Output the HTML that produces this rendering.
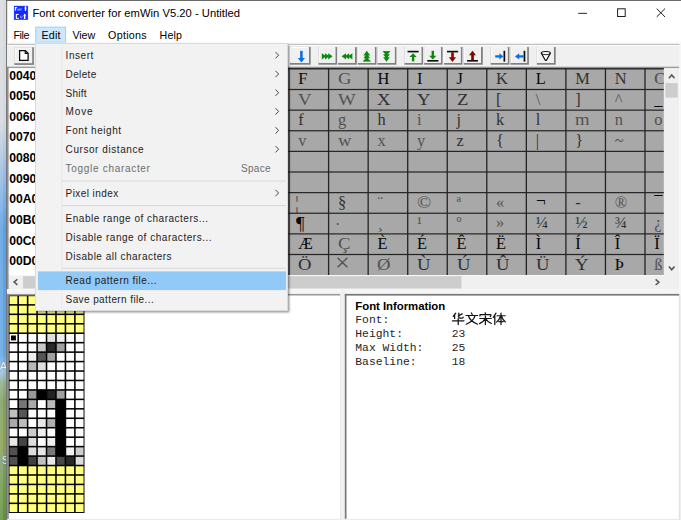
<!DOCTYPE html>
<html><head><meta charset="utf-8"><title>Font converter for emWin</title>
<style>
html,body{margin:0;padding:0;}
body{width:681px;height:520px;overflow:hidden;background:#fff;position:relative;
 font-family:"Liberation Sans",sans-serif;color:#000;}
.a{position:absolute;}
svg.L{position:absolute;left:0;top:0;}
.t{position:absolute;white-space:nowrap;line-height:1;}
.mi{position:absolute;white-space:nowrap;line-height:1;font-size:10px;color:#1c1c1c;}
.gc{position:absolute;white-space:nowrap;line-height:1;font-family:"Liberation Serif",serif;color:#000;}
.lab{position:absolute;white-space:nowrap;line-height:1;font-weight:bold;font-size:12.2px;color:#000;}
.mono{position:absolute;white-space:nowrap;line-height:1;font-family:"Liberation Mono",monospace;font-size:11.35px;color:#262626;}
</style></head>
<body>
<svg class="L" width="681" height="520" viewBox="0 0 681 520"><defs><linearGradient id="dsk" x1="0" y1="0" x2="0" y2="520" gradientUnits="userSpaceOnUse"><stop offset="0.0000" stop-color="#d9dbde"/><stop offset="0.2308" stop-color="#d6d9dd"/><stop offset="0.3365" stop-color="#97bbe2"/><stop offset="0.4423" stop-color="#5a9fe0"/><stop offset="0.6827" stop-color="#62a4e2"/><stop offset="0.7154" stop-color="#9cc2de"/><stop offset="0.7346" stop-color="#8fb090"/><stop offset="0.7692" stop-color="#7fa060"/><stop offset="0.8558" stop-color="#8aa050"/><stop offset="0.8885" stop-color="#7c9c68"/><stop offset="0.9423" stop-color="#6b9a45"/><stop offset="1.0000" stop-color="#5f8f3a"/></linearGradient></defs><rect x="0.00" y="0.00" width="7.00" height="520.00" fill="url(#dsk)"/><rect x="0.00" y="0.00" width="3.00" height="520.00" fill="#fff" opacity=".14"/><g font-family="Liberation Sans, sans-serif" font-size="11.5" fill="#f4f4f4" stroke="#20304a" stroke-width="0.35" paint-order="stroke"><text x="-0.6" y="370">A</text><text x="1.8" y="464.3">S</text></g><rect x="6.10" y="0.00" width="1.10" height="520.00" fill="#6e6e6e"/><rect x="6.10" y="0.00" width="675.00" height="0.90" fill="#5a5a5a"/><g transform="translate(13.9 5.8)"><rect width="14.2" height="14.1" fill="#2a55ff"/><rect x="0.6" y="0.6" width="13" height="12.9" fill="#1228ff"/><g fill="#fff"><rect x="1.0" y="1.3" width="1.0" height="3.6"/><rect x="1.0" y="1.3" width="2.3" height="0.9"/><rect x="1.0" y="2.8" width="1.7" height="0.7" opacity=".8"/><rect x="3.3" y="2.9" width="1.6" height="2.0" opacity=".55"/><rect x="5.4" y="2.9" width="0.8" height="2.0" opacity=".6"/><rect x="6.8" y="2.9" width="0.8" height="2.0" opacity=".6"/><rect x="5.4" y="2.8" width="2.2" height="0.7" opacity=".5"/><rect x="10.9" y="0.5" width="1.4" height="4.6"/><rect x="10.2" y="1.9" width="2.8" height="0.8" opacity=".6"/><rect x="1.9" y="8.4" width="1.1" height="4.3"/><rect x="2.2" y="8.1" width="2.6" height="1.0"/><rect x="2.2" y="12.0" width="2.8" height="1.0"/><rect x="6.4" y="9.9" width="0.8" height="2.2" opacity=".55"/><rect x="7.8" y="9.9" width="0.8" height="1.6" opacity=".55"/><rect x="7.0" y="11.6" width="1.0" height="1.0" opacity=".6"/><rect x="10.0" y="8.1" width="1.5" height="5.1"/><rect x="9.2" y="9.5" width="3.1" height="0.8" opacity=".6"/></g></g><rect x="578.20" y="12.85" width="8.80" height="0.95" fill="#1e1e1e"/><rect x="617.6" y="8.8" width="7.6" height="7.7" fill="none" stroke="#1e1e1e" stroke-width="1"/><path d="M656.7 8.6 L665 16.9 M665 8.6 L656.7 16.9" stroke="#1e1e1e" stroke-width="1" fill="none"/><rect x="35.20" y="26.65" width="30.85" height="16.15" fill="#99d1ff"/><rect x="36.20" y="27.65" width="28.85" height="14.15" fill="#cce8ff"/><rect x="7.20" y="42.60" width="674.00" height="25.40" fill="#f0f0f0"/><rect x="7.20" y="44.20" width="674.00" height="0.95" fill="#b4b4b4"/><rect x="7.20" y="45.15" width="674.00" height="0.90" fill="#ffffff"/><g transform="translate(14.4 47.3)"><rect x="0.00" y="0.00" width="19.50" height="17.60" fill="#808080"/><rect x="0.00" y="0.00" width="17.70" height="15.80" fill="#ffffff"/><rect x="1.00" y="1.00" width="16.70" height="14.80" fill="#f0f0f0"/><path d="M5.2 3.2 H11 L13.7 5.9 V13 H5.2 Z" fill="#fff" stroke="#0c0c0c" stroke-width="1.25"/><path d="M10.8 3.4 V6.1 H13.5" fill="none" stroke="#0c0c0c" stroke-width="1.1"/></g><g transform="translate(290.0 46.9)"><rect x="0.00" y="0.00" width="20.70" height="17.80" fill="#808080"/><rect x="0.00" y="0.00" width="18.90" height="16.00" fill="#ffffff"/><rect x="1.00" y="1.00" width="17.90" height="15.00" fill="#f0f0f0"/><rect x="10.1" y="4" width="2.6" height="7.8" fill="#0a6fe0"/><path d="M7.8 11 H15 L11.4 15.5 Z" fill="#0a6fe0"/></g><g transform="translate(318.4 47.1)"><rect x="0.00" y="0.00" width="18.70" height="17.60" fill="#808080"/><rect x="0.00" y="0.00" width="16.90" height="15.80" fill="#ffffff"/><rect x="1.00" y="1.00" width="15.90" height="14.80" fill="#f0f0f0"/><path d="M3.40 6.1 L7.80 9.2 L3.40 12.3 Z" fill="#0a8a0a"/><path d="M6.60 6.1 L11.00 9.2 L6.60 12.3 Z" fill="#0a8a0a"/><path d="M9.80 6.1 L14.20 9.2 L9.80 12.3 Z" fill="#0a8a0a"/></g><g transform="translate(338.09999999999997 47.1)"><rect x="0.00" y="0.00" width="18.70" height="17.60" fill="#808080"/><rect x="0.00" y="0.00" width="16.90" height="15.80" fill="#ffffff"/><rect x="1.00" y="1.00" width="15.90" height="14.80" fill="#f0f0f0"/><path d="M14.30 6.1 L9.90 9.2 L14.30 12.3 Z" fill="#0a8a0a"/><path d="M11.10 6.1 L6.70 9.2 L11.10 12.3 Z" fill="#0a8a0a"/><path d="M7.90 6.1 L3.50 9.2 L7.90 12.3 Z" fill="#0a8a0a"/></g><g transform="translate(357.79999999999995 47.1)"><rect x="0.00" y="0.00" width="18.70" height="17.60" fill="#808080"/><rect x="0.00" y="0.00" width="16.90" height="15.80" fill="#ffffff"/><rect x="1.00" y="1.00" width="15.90" height="14.80" fill="#f0f0f0"/><path d="M5.6 8.30 L9.0 3.70 L12.4 8.30 Z" fill="#0a8a0a"/><path d="M5.6 11.20 L9.0 6.60 L12.4 11.20 Z" fill="#0a8a0a"/><path d="M5.6 14.10 L9.0 9.50 L12.4 14.10 Z" fill="#0a8a0a"/><rect x="5.2" y="13.4" width="7.6" height="1" fill="#0a8a0a"/></g><g transform="translate(377.5 47.1)"><rect x="0.00" y="0.00" width="18.90" height="17.60" fill="#808080"/><rect x="0.00" y="0.00" width="17.10" height="15.80" fill="#ffffff"/><rect x="1.00" y="1.00" width="16.10" height="14.80" fill="#f0f0f0"/><path d="M5.6 4.30 L9.0 8.90 L12.4 4.30 Z" fill="#0a8a0a"/><path d="M5.6 7.20 L9.0 11.80 L12.4 7.20 Z" fill="#0a8a0a"/><path d="M5.6 10.10 L9.0 14.70 L12.4 10.10 Z" fill="#0a8a0a"/><rect x="5.4" y="4.1" width="7.2" height="1" fill="#0a8a0a"/></g><g transform="translate(404.5 47.1)"><rect x="0.00" y="0.00" width="18.60" height="17.60" fill="#808080"/><rect x="0.00" y="0.00" width="16.80" height="15.80" fill="#ffffff"/><rect x="1.00" y="1.00" width="15.80" height="14.80" fill="#f0f0f0"/><rect x="3.05" y="3.7" width="11.1" height="1.6" fill="#0c0c0c"/><path d="M8.6 6.1 L12.2 10 H5 Z" fill="#0a8a0a"/><rect x="7.4" y="9.6" width="2.4" height="4.7" fill="#0a8a0a"/></g><g transform="translate(424.2 47.1)"><rect x="0.00" y="0.00" width="18.40" height="17.60" fill="#808080"/><rect x="0.00" y="0.00" width="16.60" height="15.80" fill="#ffffff"/><rect x="1.00" y="1.00" width="15.60" height="14.80" fill="#f0f0f0"/><rect x="3.1" y="12.9" width="11.1" height="1.6" fill="#0c0c0c"/><rect x="7.4" y="3.7" width="2.4" height="5.4" fill="#0a8a0a"/><path d="M5 8.6 H12.2 L8.6 12.4 Z" fill="#0a8a0a"/></g><g transform="translate(444.0 47.1)"><rect x="0.00" y="0.00" width="18.40" height="17.60" fill="#808080"/><rect x="0.00" y="0.00" width="16.60" height="15.80" fill="#ffffff"/><rect x="1.00" y="1.00" width="15.60" height="14.80" fill="#f0f0f0"/><rect x="3.0" y="3.7" width="11.1" height="1.6" fill="#0c0c0c"/><rect x="7.2" y="5.2" width="2.6" height="5.6" fill="#860000"/><path d="M4.9 10.2 H12.1 L8.5 14.9 Z" fill="#860000"/></g><g transform="translate(463.7 47.1)"><rect x="0.00" y="0.00" width="19.10" height="17.60" fill="#808080"/><rect x="0.00" y="0.00" width="17.30" height="15.80" fill="#ffffff"/><rect x="1.00" y="1.00" width="16.30" height="14.80" fill="#f0f0f0"/><rect x="3.4" y="12.9" width="10.8" height="1.6" fill="#0c0c0c"/><path d="M8.8 3.6 L12.3 8.2 H5.3 Z" fill="#860000"/><rect x="7.5" y="7.8" width="2.7" height="5.2" fill="#860000"/></g><g transform="translate(490.7 47.1)"><rect x="0.00" y="0.00" width="18.70" height="17.60" fill="#808080"/><rect x="0.00" y="0.00" width="16.90" height="15.80" fill="#ffffff"/><rect x="1.00" y="1.00" width="15.90" height="14.80" fill="#f0f0f0"/><rect x="12.8" y="3.7" width="1.7" height="10.8" fill="#0c0c0c"/><rect x="4.5" y="8.15" width="5" height="2.3" fill="#0a6fe0"/><path d="M8.7 6.1 L12.7 9.3 L8.7 12.5 Z" fill="#0a6fe0"/></g><g transform="translate(510.4 47.1)"><rect x="0.00" y="0.00" width="18.50" height="17.60" fill="#808080"/><rect x="0.00" y="0.00" width="16.70" height="15.80" fill="#ffffff"/><rect x="1.00" y="1.00" width="15.70" height="14.80" fill="#f0f0f0"/><rect x="13.2" y="3.7" width="1.7" height="10.8" fill="#0c0c0c"/><rect x="8" y="8.15" width="5.3" height="2.3" fill="#0a6fe0"/><path d="M8.8 6.1 L4.6 9.3 L8.8 12.5 Z" fill="#0a6fe0"/></g><g transform="translate(536.8 47.1)"><rect x="0.00" y="0.00" width="18.90" height="17.60" fill="#808080"/><rect x="0.00" y="0.00" width="17.10" height="15.80" fill="#ffffff"/><rect x="1.00" y="1.00" width="16.10" height="14.80" fill="#f0f0f0"/><path d="M4.5 6 C4.5 3.8 13.6 3.8 13.6 6 L9.6 13.2 H8.5 Z" fill="#fff" stroke="#0c0c0c" stroke-width="1.15" stroke-linejoin="round"/><path d="M4.7 6.4 C6 8 12.1 8 13.4 6.4" fill="none" stroke="#0c0c0c" stroke-width="0.9"/></g><rect x="6.90" y="66.70" width="1.90" height="222.40" fill="#8e8e8e"/><rect x="8.00" y="66.70" width="671.30" height="1.60" fill="#9c9c9c"/><rect x="8.75" y="68.30" width="43.00" height="206.70" fill="#fff"/><rect x="51.75" y="68.30" width="612.15" height="206.70" fill="#a8a8a8"/><rect x="51.75" y="67.90" width="612.15" height="1.00" fill="#3a3a3a"/><rect x="51.10" y="68.30" width="1.30" height="206.70" fill="#242424"/><rect x="90.65" y="68.30" width="1.30" height="206.70" fill="#242424"/><rect x="130.20" y="68.30" width="1.30" height="206.70" fill="#242424"/><rect x="169.75" y="68.30" width="1.30" height="206.70" fill="#242424"/><rect x="209.30" y="68.30" width="1.30" height="206.70" fill="#242424"/><rect x="248.85" y="68.30" width="1.30" height="206.70" fill="#242424"/><rect x="288.40" y="68.30" width="1.30" height="206.70" fill="#242424"/><rect x="327.95" y="68.30" width="1.30" height="206.70" fill="#242424"/><rect x="367.50" y="68.30" width="1.30" height="206.70" fill="#242424"/><rect x="407.05" y="68.30" width="1.30" height="206.70" fill="#242424"/><rect x="446.60" y="68.30" width="1.30" height="206.70" fill="#242424"/><rect x="486.15" y="68.30" width="1.30" height="206.70" fill="#242424"/><rect x="525.70" y="68.30" width="1.30" height="206.70" fill="#242424"/><rect x="565.25" y="68.30" width="1.30" height="206.70" fill="#242424"/><rect x="604.80" y="68.30" width="1.30" height="206.70" fill="#242424"/><rect x="644.35" y="68.30" width="1.30" height="206.70" fill="#242424"/><rect x="51.75" y="68.28" width="612.15" height="1.20" fill="#242424"/><rect x="51.75" y="88.90" width="612.15" height="1.20" fill="#242424"/><rect x="51.75" y="109.53" width="612.15" height="1.20" fill="#242424"/><rect x="51.75" y="130.15" width="612.15" height="1.20" fill="#242424"/><rect x="51.75" y="150.78" width="612.15" height="1.20" fill="#242424"/><rect x="51.75" y="171.40" width="612.15" height="1.20" fill="#242424"/><rect x="51.75" y="192.03" width="612.15" height="1.20" fill="#242424"/><rect x="51.75" y="212.65" width="612.15" height="1.20" fill="#242424"/><rect x="51.75" y="233.28" width="612.15" height="1.20" fill="#242424"/><rect x="51.75" y="253.90" width="612.15" height="1.20" fill="#242424"/><rect x="663.90" y="68.30" width="15.40" height="221.00" fill="#f0f0f0"/><rect x="665.40" y="83.10" width="12.30" height="14.50" fill="#cdcdcd"/><path d="M668.9 78.2 L671.7 74.9 L674.5 78.2" fill="none" stroke="#555" stroke-width="1.55"/><path d="M668.9 266.5 L671.7 269.8 L674.5 266.5" fill="none" stroke="#555" stroke-width="1.55"/><rect x="679.40" y="43.00" width="1.60" height="477.00" fill="#f7f7f7"/><rect x="8.75" y="275.40" width="670.55" height="13.90" fill="#f0f0f0"/><rect x="23.10" y="276.20" width="438.40" height="12.30" fill="#cdcdcd"/><path d="M17.4 279.3 L14.1 282.1 L17.4 284.9" fill="none" stroke="#555" stroke-width="1.5"/><path d="M655.6 279.4 L658.9 282.2 L655.6 285" fill="none" stroke="#555" stroke-width="1.5"/><rect x="6.90" y="289.30" width="672.40" height="4.60" fill="#f5f5f5"/><rect x="7.00" y="293.90" width="334.00" height="226.10" fill="#fff"/><rect x="7.00" y="293.90" width="334.00" height="1.60" fill="#9a9a9a"/><rect x="6.80" y="293.90" width="2.00" height="226.10" fill="#8e8e8e"/><rect x="340.00" y="294.00" width="1.20" height="226.00" fill="#e6e6e6"/><rect x="341.20" y="289.30" width="3.60" height="230.70" fill="#f0f0f0"/><rect x="7.20" y="518.80" width="673.80" height="1.20" fill="#ebebeb"/><rect x="344.80" y="293.90" width="334.50" height="1.70" fill="#787878"/><rect x="344.80" y="293.90" width="1.70" height="224.90" fill="#787878"/><rect x="678.90" y="295.50" width="1.10" height="224.50" fill="#e2e2e2"/><rect x="680.00" y="295.50" width="1.00" height="224.50" fill="#eeeeee"/><rect x="8.75" y="295.45" width="75.75" height="217.50" fill="#000"/><rect x="9.50" y="296.20" width="7.90" height="7.90" fill="#ffff80"/><rect x="18.95" y="296.20" width="7.90" height="7.90" fill="#ffff80"/><rect x="28.40" y="296.20" width="7.90" height="7.90" fill="#ffff80"/><rect x="37.85" y="296.20" width="7.90" height="7.90" fill="#ffff80"/><rect x="47.30" y="296.20" width="7.90" height="7.90" fill="#ffff80"/><rect x="56.75" y="296.20" width="7.90" height="7.90" fill="#ffff80"/><rect x="66.20" y="296.20" width="7.90" height="7.90" fill="#ffff80"/><rect x="75.65" y="296.20" width="7.90" height="7.90" fill="#ffff80"/><rect x="9.50" y="305.65" width="7.90" height="7.90" fill="#ffff80"/><rect x="18.95" y="305.65" width="7.90" height="7.90" fill="#ffff80"/><rect x="28.40" y="305.65" width="7.90" height="7.90" fill="#ffff80"/><rect x="37.85" y="305.65" width="7.90" height="7.90" fill="#ffff80"/><rect x="47.30" y="305.65" width="7.90" height="7.90" fill="#ffff80"/><rect x="56.75" y="305.65" width="7.90" height="7.90" fill="#ffff80"/><rect x="66.20" y="305.65" width="7.90" height="7.90" fill="#ffff80"/><rect x="75.65" y="305.65" width="7.90" height="7.90" fill="#ffff80"/><rect x="9.50" y="315.10" width="7.90" height="7.90" fill="#ffff80"/><rect x="18.95" y="315.10" width="7.90" height="7.90" fill="#ffff80"/><rect x="28.40" y="315.10" width="7.90" height="7.90" fill="#ffff80"/><rect x="37.85" y="315.10" width="7.90" height="7.90" fill="#ffff80"/><rect x="47.30" y="315.10" width="7.90" height="7.90" fill="#ffff80"/><rect x="56.75" y="315.10" width="7.90" height="7.90" fill="#ffff80"/><rect x="66.20" y="315.10" width="7.90" height="7.90" fill="#ffff80"/><rect x="75.65" y="315.10" width="7.90" height="7.90" fill="#ffff80"/><rect x="9.50" y="324.55" width="7.90" height="7.90" fill="#ffff80"/><rect x="18.95" y="324.55" width="7.90" height="7.90" fill="#ffff80"/><rect x="28.40" y="324.55" width="7.90" height="7.90" fill="#ffff80"/><rect x="37.85" y="324.55" width="7.90" height="7.90" fill="#ffff80"/><rect x="47.30" y="324.55" width="7.90" height="7.90" fill="#ffff80"/><rect x="56.75" y="324.55" width="7.90" height="7.90" fill="#ffff80"/><rect x="66.20" y="324.55" width="7.90" height="7.90" fill="#ffff80"/><rect x="75.65" y="324.55" width="7.90" height="7.90" fill="#ffff80"/><rect x="9.50" y="334.00" width="7.90" height="7.90" fill="#fff"/><rect x="18.95" y="334.00" width="7.90" height="7.90" fill="#fff"/><rect x="28.40" y="334.00" width="7.90" height="7.90" fill="#fff"/><rect x="37.85" y="334.00" width="7.90" height="7.90" fill="#fff"/><rect x="47.30" y="334.00" width="7.90" height="7.90" fill="#e0e0e0"/><rect x="56.75" y="334.00" width="7.90" height="7.90" fill="#eeeeee"/><rect x="66.20" y="334.00" width="7.90" height="7.90" fill="#fff"/><rect x="75.65" y="334.00" width="7.90" height="7.90" fill="#fff"/><rect x="9.50" y="343.45" width="7.90" height="7.90" fill="#fff"/><rect x="18.95" y="343.45" width="7.90" height="7.90" fill="#fff"/><rect x="28.40" y="343.45" width="7.90" height="7.90" fill="#fff"/><rect x="37.85" y="343.45" width="7.90" height="7.90" fill="#c8c8c8"/><rect x="47.30" y="343.45" width="7.90" height="7.90" fill="#282828"/><rect x="56.75" y="343.45" width="7.90" height="7.90" fill="#a0a0a0"/><rect x="66.20" y="343.45" width="7.90" height="7.90" fill="#fff"/><rect x="75.65" y="343.45" width="7.90" height="7.90" fill="#fff"/><rect x="9.50" y="352.90" width="7.90" height="7.90" fill="#fff"/><rect x="18.95" y="352.90" width="7.90" height="7.90" fill="#fff"/><rect x="28.40" y="352.90" width="7.90" height="7.90" fill="#eeeeee"/><rect x="37.85" y="352.90" width="7.90" height="7.90" fill="#555555"/><rect x="47.30" y="352.90" width="7.90" height="7.90" fill="#a0a0a0"/><rect x="56.75" y="352.90" width="7.90" height="7.90" fill="#fff"/><rect x="66.20" y="352.90" width="7.90" height="7.90" fill="#fff"/><rect x="75.65" y="352.90" width="7.90" height="7.90" fill="#fff"/><rect x="9.50" y="362.35" width="7.90" height="7.90" fill="#fff"/><rect x="18.95" y="362.35" width="7.90" height="7.90" fill="#fff"/><rect x="28.40" y="362.35" width="7.90" height="7.90" fill="#b8b8b8"/><rect x="37.85" y="362.35" width="7.90" height="7.90" fill="#e0e0e0"/><rect x="47.30" y="362.35" width="7.90" height="7.90" fill="#fff"/><rect x="56.75" y="362.35" width="7.90" height="7.90" fill="#fff"/><rect x="66.20" y="362.35" width="7.90" height="7.90" fill="#fff"/><rect x="75.65" y="362.35" width="7.90" height="7.90" fill="#fff"/><rect x="9.50" y="371.80" width="7.90" height="7.90" fill="#fff"/><rect x="18.95" y="371.80" width="7.90" height="7.90" fill="#fff"/><rect x="28.40" y="371.80" width="7.90" height="7.90" fill="#fff"/><rect x="37.85" y="371.80" width="7.90" height="7.90" fill="#fff"/><rect x="47.30" y="371.80" width="7.90" height="7.90" fill="#fff"/><rect x="56.75" y="371.80" width="7.90" height="7.90" fill="#fff"/><rect x="66.20" y="371.80" width="7.90" height="7.90" fill="#fff"/><rect x="75.65" y="371.80" width="7.90" height="7.90" fill="#fff"/><rect x="9.50" y="381.25" width="7.90" height="7.90" fill="#fff"/><rect x="18.95" y="381.25" width="7.90" height="7.90" fill="#fff"/><rect x="28.40" y="381.25" width="7.90" height="7.90" fill="#fff"/><rect x="37.85" y="381.25" width="7.90" height="7.90" fill="#fff"/><rect x="47.30" y="381.25" width="7.90" height="7.90" fill="#fff"/><rect x="56.75" y="381.25" width="7.90" height="7.90" fill="#fff"/><rect x="66.20" y="381.25" width="7.90" height="7.90" fill="#fff"/><rect x="75.65" y="381.25" width="7.90" height="7.90" fill="#fff"/><rect x="9.50" y="390.70" width="7.90" height="7.90" fill="#fff"/><rect x="18.95" y="390.70" width="7.90" height="7.90" fill="#fff"/><rect x="28.40" y="390.70" width="7.90" height="7.90" fill="#999999"/><rect x="37.85" y="390.70" width="7.90" height="7.90" fill="#000000"/><rect x="47.30" y="390.70" width="7.90" height="7.90" fill="#222222"/><rect x="56.75" y="390.70" width="7.90" height="7.90" fill="#a0a0a0"/><rect x="66.20" y="390.70" width="7.90" height="7.90" fill="#fff"/><rect x="75.65" y="390.70" width="7.90" height="7.90" fill="#fff"/><rect x="9.50" y="400.15" width="7.90" height="7.90" fill="#fff"/><rect x="18.95" y="400.15" width="7.90" height="7.90" fill="#777777"/><rect x="28.40" y="400.15" width="7.90" height="7.90" fill="#aaaaaa"/><rect x="37.85" y="400.15" width="7.90" height="7.90" fill="#fff"/><rect x="47.30" y="400.15" width="7.90" height="7.90" fill="#bbbbbb"/><rect x="56.75" y="400.15" width="7.90" height="7.90" fill="#000000"/><rect x="66.20" y="400.15" width="7.90" height="7.90" fill="#fff"/><rect x="75.65" y="400.15" width="7.90" height="7.90" fill="#fff"/><rect x="9.50" y="409.60" width="7.90" height="7.90" fill="#c0c0c0"/><rect x="18.95" y="409.60" width="7.90" height="7.90" fill="#555555"/><rect x="28.40" y="409.60" width="7.90" height="7.90" fill="#fff"/><rect x="37.85" y="409.60" width="7.90" height="7.90" fill="#fff"/><rect x="47.30" y="409.60" width="7.90" height="7.90" fill="#fff"/><rect x="56.75" y="409.60" width="7.90" height="7.90" fill="#000000"/><rect x="66.20" y="409.60" width="7.90" height="7.90" fill="#fff"/><rect x="75.65" y="409.60" width="7.90" height="7.90" fill="#fff"/><rect x="9.50" y="419.05" width="7.90" height="7.90" fill="#aaaaaa"/><rect x="18.95" y="419.05" width="7.90" height="7.90" fill="#bbbbbb"/><rect x="28.40" y="419.05" width="7.90" height="7.90" fill="#fff"/><rect x="37.85" y="419.05" width="7.90" height="7.90" fill="#e8e8e8"/><rect x="47.30" y="419.05" width="7.90" height="7.90" fill="#b0b0b0"/><rect x="56.75" y="419.05" width="7.90" height="7.90" fill="#000000"/><rect x="66.20" y="419.05" width="7.90" height="7.90" fill="#fff"/><rect x="75.65" y="419.05" width="7.90" height="7.90" fill="#fff"/><rect x="9.50" y="428.50" width="7.90" height="7.90" fill="#fff"/><rect x="18.95" y="428.50" width="7.90" height="7.90" fill="#fff"/><rect x="28.40" y="428.50" width="7.90" height="7.90" fill="#cccccc"/><rect x="37.85" y="428.50" width="7.90" height="7.90" fill="#eeeeee"/><rect x="47.30" y="428.50" width="7.90" height="7.90" fill="#fff"/><rect x="56.75" y="428.50" width="7.90" height="7.90" fill="#000000"/><rect x="66.20" y="428.50" width="7.90" height="7.90" fill="#fff"/><rect x="75.65" y="428.50" width="7.90" height="7.90" fill="#fff"/><rect x="9.50" y="437.95" width="7.90" height="7.90" fill="#e8e8e8"/><rect x="18.95" y="437.95" width="7.90" height="7.90" fill="#444444"/><rect x="28.40" y="437.95" width="7.90" height="7.90" fill="#dddddd"/><rect x="37.85" y="437.95" width="7.90" height="7.90" fill="#fff"/><rect x="47.30" y="437.95" width="7.90" height="7.90" fill="#eeeeee"/><rect x="56.75" y="437.95" width="7.90" height="7.90" fill="#000000"/><rect x="66.20" y="437.95" width="7.90" height="7.90" fill="#fff"/><rect x="75.65" y="437.95" width="7.90" height="7.90" fill="#fff"/><rect x="9.50" y="447.40" width="7.90" height="7.90" fill="#505050"/><rect x="18.95" y="447.40" width="7.90" height="7.90" fill="#000000"/><rect x="28.40" y="447.40" width="7.90" height="7.90" fill="#dcdcdc"/><rect x="37.85" y="447.40" width="7.90" height="7.90" fill="#e6e6e6"/><rect x="47.30" y="447.40" width="7.90" height="7.90" fill="#777777"/><rect x="56.75" y="447.40" width="7.90" height="7.90" fill="#000000"/><rect x="66.20" y="447.40" width="7.90" height="7.90" fill="#f0f0f0"/><rect x="75.65" y="447.40" width="7.90" height="7.90" fill="#cccccc"/><rect x="9.50" y="456.85" width="7.90" height="7.90" fill="#505050"/><rect x="18.95" y="456.85" width="7.90" height="7.90" fill="#000000"/><rect x="28.40" y="456.85" width="7.90" height="7.90" fill="#404040"/><rect x="37.85" y="456.85" width="7.90" height="7.90" fill="#c0c0c0"/><rect x="47.30" y="456.85" width="7.90" height="7.90" fill="#e8e8e8"/><rect x="56.75" y="456.85" width="7.90" height="7.90" fill="#484848"/><rect x="66.20" y="456.85" width="7.90" height="7.90" fill="#282828"/><rect x="75.65" y="456.85" width="7.90" height="7.90" fill="#dcdcdc"/><rect x="9.50" y="466.30" width="7.90" height="7.90" fill="#ffff80"/><rect x="18.95" y="466.30" width="7.90" height="7.90" fill="#ffff80"/><rect x="28.40" y="466.30" width="7.90" height="7.90" fill="#ffff80"/><rect x="37.85" y="466.30" width="7.90" height="7.90" fill="#ffff80"/><rect x="47.30" y="466.30" width="7.90" height="7.90" fill="#ffff80"/><rect x="56.75" y="466.30" width="7.90" height="7.90" fill="#ffff80"/><rect x="66.20" y="466.30" width="7.90" height="7.90" fill="#ffff80"/><rect x="75.65" y="466.30" width="7.90" height="7.90" fill="#ffff80"/><rect x="9.50" y="475.75" width="7.90" height="7.90" fill="#ffff80"/><rect x="18.95" y="475.75" width="7.90" height="7.90" fill="#ffff80"/><rect x="28.40" y="475.75" width="7.90" height="7.90" fill="#ffff80"/><rect x="37.85" y="475.75" width="7.90" height="7.90" fill="#ffff80"/><rect x="47.30" y="475.75" width="7.90" height="7.90" fill="#ffff80"/><rect x="56.75" y="475.75" width="7.90" height="7.90" fill="#ffff80"/><rect x="66.20" y="475.75" width="7.90" height="7.90" fill="#ffff80"/><rect x="75.65" y="475.75" width="7.90" height="7.90" fill="#ffff80"/><rect x="9.50" y="485.20" width="7.90" height="7.90" fill="#ffff80"/><rect x="18.95" y="485.20" width="7.90" height="7.90" fill="#ffff80"/><rect x="28.40" y="485.20" width="7.90" height="7.90" fill="#ffff80"/><rect x="37.85" y="485.20" width="7.90" height="7.90" fill="#ffff80"/><rect x="47.30" y="485.20" width="7.90" height="7.90" fill="#ffff80"/><rect x="56.75" y="485.20" width="7.90" height="7.90" fill="#ffff80"/><rect x="66.20" y="485.20" width="7.90" height="7.90" fill="#ffff80"/><rect x="75.65" y="485.20" width="7.90" height="7.90" fill="#ffff80"/><rect x="9.50" y="494.65" width="7.90" height="7.90" fill="#ffff80"/><rect x="18.95" y="494.65" width="7.90" height="7.90" fill="#ffff80"/><rect x="28.40" y="494.65" width="7.90" height="7.90" fill="#ffff80"/><rect x="37.85" y="494.65" width="7.90" height="7.90" fill="#ffff80"/><rect x="47.30" y="494.65" width="7.90" height="7.90" fill="#ffff80"/><rect x="56.75" y="494.65" width="7.90" height="7.90" fill="#ffff80"/><rect x="66.20" y="494.65" width="7.90" height="7.90" fill="#ffff80"/><rect x="75.65" y="494.65" width="7.90" height="7.90" fill="#ffff80"/><rect x="9.50" y="504.10" width="7.90" height="7.90" fill="#ffff80"/><rect x="18.95" y="504.10" width="7.90" height="7.90" fill="#ffff80"/><rect x="28.40" y="504.10" width="7.90" height="7.90" fill="#ffff80"/><rect x="37.85" y="504.10" width="7.90" height="7.90" fill="#ffff80"/><rect x="47.30" y="504.10" width="7.90" height="7.90" fill="#ffff80"/><rect x="56.75" y="504.10" width="7.90" height="7.90" fill="#ffff80"/><rect x="66.20" y="504.10" width="7.90" height="7.90" fill="#ffff80"/><rect x="75.65" y="504.10" width="7.90" height="7.90" fill="#ffff80"/><rect x="11.00" y="335.50" width="4.90" height="4.90" fill="#000"/><g transform="translate(451.6 312.4) scale(1 0.921)" fill="none" stroke="#151515" stroke-width="1.28" stroke-linecap="round" stroke-linejoin="round"><path d="M4.2 0.8 L1.6 4.2 M3 2.6 V6.6 M10.6 1.6 L6.6 3.8 M7.2 0.8 V5.2 Q7.2 6.2 8.2 6.2 H10.6 Q11.6 6.2 11.6 5"/><path d="M0.8 9.2 H12.4 M6.6 6.8 V13.2"/><g transform="translate(13.6 0)"><path d="M6.2 0.6 L7 2.2 M0.8 3.4 H12.4 M9.8 3.6 Q8.6 9.6 1 12.8 M3.2 3.6 Q5 9.8 12.4 12.8"/></g><g transform="translate(27.2 0)"><path d="M6.4 0.4 L6.8 1.8 M1.2 4 V2.4 H12 V4 L11.4 4.6 M1 6.6 H12.4 M6.6 4 V13.2 M6.2 6.8 Q4.6 10.4 0.8 12.2 M7 6.8 Q8.8 10.4 12.6 12"/></g><g transform="translate(40.8 0)"><path d="M3.6 0.8 L0.8 5.6 M2.4 3.6 V13.2 M4.6 3.6 H12.8 M8.6 0.8 V13.2 M8.2 3.8 Q7 8 4.2 10.6 M9 3.8 Q10.2 8 13 10.4 M6.4 10 H10.8"/></g></g></svg>
<div class="t" style="left:32.4px;top:8.3px;font-size:11.2px;color:#000;letter-spacing:0.029px;">Font converter for emWin V5.20 - Untitled</div>
<div class="t" style="left:13.5px;top:30.2px;font-size:10.7px;color:#000;letter-spacing:-0.425px;">File</div>
<div class="t" style="left:41.6px;top:30.2px;font-size:10.7px;color:#000;letter-spacing:0.150px;">Edit</div>
<div class="t" style="left:72.5px;top:30.2px;font-size:10.7px;color:#000;letter-spacing:-0.125px;">View</div>
<div class="t" style="left:108px;top:30.2px;font-size:10.7px;color:#000;letter-spacing:0.314px;">Options</div>
<div class="t" style="left:159.6px;top:30.2px;font-size:10.7px;color:#000;letter-spacing:0.150px;">Help</div>
<div class="a" style="left:8px;top:66px;width:655.9px;height:209.0px;overflow:hidden;">
<div class="lab" style="left:1.20px;top:3.60px;">0040</div>
<div class="lab" style="left:1.20px;top:24.22px;">0050</div>
<div class="lab" style="left:1.20px;top:44.85px;">0060</div>
<div class="lab" style="left:1.20px;top:65.47px;">0070</div>
<div class="lab" style="left:1.20px;top:86.10px;">0080</div>
<div class="lab" style="left:1.20px;top:106.72px;">0090</div>
<div class="lab" style="left:1.20px;top:127.35px;">00A0</div>
<div class="lab" style="left:1.20px;top:147.97px;">00B0</div>
<div class="lab" style="left:1.20px;top:168.60px;">00C0</div>
<div class="lab" style="left:1.20px;top:189.22px;">00D0</div>
<div class="gc" style="left:290.35px;top:5.05px;font-size:16.4px;opacity:0.95;">F</div>
<div class="gc" style="left:329.90px;top:5.05px;font-size:16.4px;opacity:0.52;transform:scaleX(1.14);transform-origin:0 0;">G</div>
<div class="gc" style="left:369.45px;top:5.05px;font-size:16.4px;opacity:0.95;">H</div>
<div class="gc" style="left:409.00px;top:5.05px;font-size:16.4px;opacity:0.95;">I</div>
<div class="gc" style="left:448.55px;top:5.05px;font-size:16.4px;opacity:0.95;">J</div>
<div class="gc" style="left:488.10px;top:5.05px;font-size:16.4px;opacity:0.72;">K</div>
<div class="gc" style="left:527.65px;top:5.05px;font-size:16.4px;opacity:0.95;">L</div>
<div class="gc" style="left:567.20px;top:5.05px;font-size:16.4px;opacity:0.72;">M</div>
<div class="gc" style="left:606.75px;top:5.05px;font-size:16.4px;opacity:0.72;">N</div>
<div class="gc" style="left:646.30px;top:5.05px;font-size:16.4px;opacity:0.52;transform:scaleX(1.14);transform-origin:0 0;">O</div>
<div class="gc" style="left:290.35px;top:25.67px;font-size:16.4px;opacity:0.52;transform:scaleX(1.14);transform-origin:0 0;">V</div>
<div class="gc" style="left:329.90px;top:25.67px;font-size:16.4px;opacity:0.52;transform:scaleX(1.14);transform-origin:0 0;">W</div>
<div class="gc" style="left:369.45px;top:25.67px;font-size:16.4px;opacity:0.72;transform:scaleX(1.14);transform-origin:0 0;">X</div>
<div class="gc" style="left:409.00px;top:25.67px;font-size:16.4px;opacity:0.72;transform:scaleX(1.14);transform-origin:0 0;">Y</div>
<div class="gc" style="left:448.55px;top:25.67px;font-size:16.4px;opacity:0.72;transform:scaleX(1.14);transform-origin:0 0;">Z</div>
<div class="gc" style="left:488.10px;top:25.67px;font-size:16.4px;opacity:0.72;">[</div>
<div class="gc" style="left:527.65px;top:25.67px;font-size:16.4px;opacity:0.52;">\</div>
<div class="gc" style="left:567.20px;top:25.67px;font-size:16.4px;opacity:0.72;">]</div>
<div class="gc" style="left:606.75px;top:25.67px;font-size:16.4px;opacity:0.52;">^</div>
<div class="gc" style="left:646.30px;top:25.67px;font-size:16.4px;opacity:0.95;">_</div>
<div class="gc" style="left:290.35px;top:46.30px;font-size:16.4px;opacity:0.72;">f</div>
<div class="gc" style="left:329.90px;top:46.30px;font-size:16.4px;opacity:0.52;">g</div>
<div class="gc" style="left:369.45px;top:46.30px;font-size:16.4px;opacity:0.72;">h</div>
<div class="gc" style="left:409.00px;top:46.30px;font-size:16.4px;opacity:0.52;">i</div>
<div class="gc" style="left:448.55px;top:46.30px;font-size:16.4px;opacity:0.72;">j</div>
<div class="gc" style="left:488.10px;top:46.30px;font-size:16.4px;opacity:0.72;">k</div>
<div class="gc" style="left:527.65px;top:46.30px;font-size:16.4px;opacity:0.72;">l</div>
<div class="gc" style="left:567.20px;top:46.30px;font-size:16.4px;opacity:0.52;transform:scaleX(1.14);transform-origin:0 0;">m</div>
<div class="gc" style="left:606.75px;top:46.30px;font-size:16.4px;opacity:0.52;">n</div>
<div class="gc" style="left:646.30px;top:46.30px;font-size:16.4px;opacity:0.52;">o</div>
<div class="gc" style="left:290.35px;top:66.92px;font-size:16.4px;opacity:0.52;">v</div>
<div class="gc" style="left:329.90px;top:66.92px;font-size:16.4px;opacity:0.52;transform:scaleX(1.14);transform-origin:0 0;">w</div>
<div class="gc" style="left:369.45px;top:66.92px;font-size:16.4px;opacity:0.52;">x</div>
<div class="gc" style="left:409.00px;top:66.92px;font-size:16.4px;opacity:0.52;">y</div>
<div class="gc" style="left:448.55px;top:66.92px;font-size:16.4px;opacity:0.72;">z</div>
<div class="gc" style="left:488.10px;top:66.92px;font-size:16.4px;opacity:0.72;">{</div>
<div class="gc" style="left:527.65px;top:66.92px;font-size:16.4px;opacity:0.72;">|</div>
<div class="gc" style="left:567.20px;top:66.92px;font-size:16.4px;opacity:0.72;">}</div>
<div class="gc" style="left:606.75px;top:66.92px;font-size:16.4px;opacity:0.52;">~</div>
<div class="gc" style="left:287.35px;top:129.80px;font-size:16.4px;opacity:0.72;transform:scale(1,1.1);transform-origin:0 80%;">¦</div>
<div class="gc" style="left:329.90px;top:128.80px;font-size:16.4px;opacity:0.72;">§</div>
<div class="gc" style="left:369.45px;top:128.80px;font-size:16.4px;opacity:0.52;">¨</div>
<div class="gc" style="left:409.00px;top:128.80px;font-size:16.4px;opacity:0.52;transform:scaleX(1.14);transform-origin:0 0;">©</div>
<div class="gc" style="left:448.55px;top:128.80px;font-size:16.4px;opacity:0.52;">ª</div>
<div class="gc" style="left:488.10px;top:128.80px;font-size:16.4px;opacity:0.52;">«</div>
<div class="gc" style="left:527.65px;top:127.30px;font-size:16.4px;opacity:0.95;transform:scale(1.05,1);transform-origin:0 80%;">¬</div>
<div class="gc" style="left:567.20px;top:128.80px;font-size:16.4px;opacity:0.72;">-</div>
<div class="gc" style="left:606.75px;top:128.80px;font-size:16.4px;opacity:0.52;">®</div>
<div class="gc" style="left:646.30px;top:128.80px;font-size:16.4px;opacity:0.95;">¯</div>
<div class="gc" style="left:288.15px;top:150.92px;font-size:16.4px;opacity:0.95;transform:scale(1.15,1.2);transform-origin:0 80%;">¶</div>
<div class="gc" style="left:326.90px;top:151.42px;font-size:16.4px;opacity:0.52;transform:scale(1,1);transform-origin:0 80%;">·</div>
<div class="gc" style="left:369.45px;top:149.42px;font-size:16.4px;opacity:0.52;">¸</div>
<div class="gc" style="left:409.00px;top:149.42px;font-size:16.4px;opacity:0.52;">¹</div>
<div class="gc" style="left:448.55px;top:149.42px;font-size:16.4px;opacity:0.52;">º</div>
<div class="gc" style="left:488.10px;top:149.42px;font-size:16.4px;opacity:0.52;">»</div>
<div class="gc" style="left:527.65px;top:149.42px;font-size:16.4px;opacity:0.72;">¼</div>
<div class="gc" style="left:567.20px;top:149.42px;font-size:16.4px;opacity:0.72;">½</div>
<div class="gc" style="left:606.75px;top:149.42px;font-size:16.4px;opacity:0.72;">¾</div>
<div class="gc" style="left:646.30px;top:149.42px;font-size:16.4px;opacity:0.52;">¿</div>
<div class="gc" style="left:290.35px;top:170.05px;font-size:16.4px;opacity:0.95;">Æ</div>
<div class="gc" style="left:329.90px;top:170.05px;font-size:16.4px;opacity:0.52;transform:scaleX(1.14);transform-origin:0 0;">Ç</div>
<div class="gc" style="left:369.45px;top:170.05px;font-size:16.4px;opacity:0.95;">È</div>
<div class="gc" style="left:409.00px;top:170.05px;font-size:16.4px;opacity:0.95;">É</div>
<div class="gc" style="left:448.55px;top:170.05px;font-size:16.4px;opacity:0.95;">Ê</div>
<div class="gc" style="left:488.10px;top:170.05px;font-size:16.4px;opacity:0.95;">Ë</div>
<div class="gc" style="left:527.65px;top:170.05px;font-size:16.4px;opacity:0.95;">Ì</div>
<div class="gc" style="left:567.20px;top:170.05px;font-size:16.4px;opacity:0.95;">Í</div>
<div class="gc" style="left:606.75px;top:170.05px;font-size:16.4px;opacity:0.95;">Î</div>
<div class="gc" style="left:646.30px;top:170.05px;font-size:16.4px;opacity:0.95;">Ï</div>
<div class="gc" style="left:290.35px;top:190.67px;font-size:16.4px;opacity:0.72;transform:scaleX(1.14);transform-origin:0 0;">Ö</div>
<div class="gc" style="left:327.30px;top:191.67px;font-size:16.4px;opacity:0.52;transform:scale(1.6,1.6);transform-origin:0 80%;">×</div>
<div class="gc" style="left:369.45px;top:190.67px;font-size:16.4px;opacity:0.52;transform:scaleX(1.14);transform-origin:0 0;">Ø</div>
<div class="gc" style="left:409.00px;top:190.67px;font-size:16.4px;opacity:0.72;transform:scaleX(1.14);transform-origin:0 0;">Ù</div>
<div class="gc" style="left:448.55px;top:190.67px;font-size:16.4px;opacity:0.72;transform:scaleX(1.14);transform-origin:0 0;">Ú</div>
<div class="gc" style="left:488.10px;top:190.67px;font-size:16.4px;opacity:0.72;transform:scaleX(1.14);transform-origin:0 0;">Û</div>
<div class="gc" style="left:527.65px;top:190.67px;font-size:16.4px;opacity:0.72;transform:scaleX(1.14);transform-origin:0 0;">Ü</div>
<div class="gc" style="left:567.20px;top:190.67px;font-size:16.4px;opacity:0.72;transform:scaleX(1.14);transform-origin:0 0;">Ý</div>
<div class="gc" style="left:606.75px;top:190.67px;font-size:16.4px;opacity:0.95;">Þ</div>
<div class="gc" style="left:646.30px;top:190.67px;font-size:16.4px;opacity:0.52;">ß</div>
</div>
<div class="t" style="letter-spacing:-0.037px;left:355.3px;top:301.2px;font-size:11.4px;font-weight:bold;">Font Information</div>
<div class="mono" style="left:355.3px;top:315.30px;">Font:</div>
<div class="mono" style="left:355.3px;top:329.10px;">Height:</div>
<div class="mono" style="left:451.8px;top:329.10px;">23</div>
<div class="mono" style="left:355.3px;top:342.90px;">Max Width:</div>
<div class="mono" style="left:451.8px;top:342.90px;">25</div>
<div class="mono" style="left:355.3px;top:356.70px;">Baseline:</div>
<div class="mono" style="left:451.8px;top:356.70px;">18</div>
<div class="a" style="left:35.4px;top:43.2px;width:253.1px;height:268.2px;box-sizing:border-box;background:#f2f2f2;border:1px solid #dadada;box-shadow:1.5px 1.5px 2.2px rgba(0,0,0,.45);"></div>
<svg class="L" width="681" height="520" viewBox="0 0 681 520"><rect x="61.30" y="45.20" width="0.90" height="264.20" fill="#e9e9e9"/><rect x="37.90" y="271.40" width="248.20" height="18.70" fill="#91c9f7"/><rect x="62.20" y="180.50" width="223.90" height="1.00" fill="#d9d9d9"/><rect x="62.20" y="205.10" width="223.90" height="1.00" fill="#d9d9d9"/><rect x="62.20" y="267.80" width="223.90" height="1.00" fill="#d9d9d9"/><path d="M275.5 52.00 L278.6 55.20 L275.5 58.40" fill="none" stroke="#484848" stroke-width="1.0"/><path d="M275.5 70.80 L278.6 74.00 L275.5 77.20" fill="none" stroke="#484848" stroke-width="1.0"/><path d="M275.5 89.50 L278.6 92.70 L275.5 95.90" fill="none" stroke="#484848" stroke-width="1.0"/><path d="M275.5 108.20 L278.6 111.40 L275.5 114.60" fill="none" stroke="#484848" stroke-width="1.0"/><path d="M275.5 127.20 L278.6 130.40 L275.5 133.60" fill="none" stroke="#484848" stroke-width="1.0"/><path d="M275.5 146.00 L278.6 149.20 L275.5 152.40" fill="none" stroke="#484848" stroke-width="1.0"/><path d="M275.5 189.80 L278.6 193.00 L275.5 196.20" fill="none" stroke="#484848" stroke-width="1.0"/></svg>
<div class="mi" style="left:65.6px;top:51.00px;color:#1c1c1c;letter-spacing:0.550px;">Insert</div>
<div class="mi" style="left:65.6px;top:69.80px;color:#1c1c1c;letter-spacing:0.350px;">Delete</div>
<div class="mi" style="left:65.6px;top:88.50px;color:#1c1c1c;letter-spacing:0.260px;">Shift</div>
<div class="mi" style="left:65.6px;top:107.20px;color:#1c1c1c;letter-spacing:0.875px;">Move</div>
<div class="mi" style="left:65.6px;top:126.20px;color:#1c1c1c;letter-spacing:0.545px;">Font height</div>
<div class="mi" style="left:65.6px;top:145.00px;color:#1c1c1c;letter-spacing:0.567px;">Cursor distance</div>
<div class="mi" style="left:65.6px;top:164.20px;color:#6d6d6d;letter-spacing:0.694px;">Toggle character</div>
<div class="mi" style="left:241px;top:164.20px;color:#6d6d6d;letter-spacing:0.320px;">Space</div>
<div class="mi" style="left:65.6px;top:188.80px;color:#1c1c1c;letter-spacing:0.418px;">Pixel index</div>
<div class="mi" style="left:65.6px;top:214.00px;color:#1c1c1c;letter-spacing:0.503px;">Enable range of characters...</div>
<div class="mi" style="left:65.6px;top:232.80px;color:#1c1c1c;letter-spacing:0.530px;">Disable range of characters...</div>
<div class="mi" style="left:65.6px;top:251.50px;color:#1c1c1c;letter-spacing:0.495px;">Disable all characters</div>
<div class="mi" style="left:65.6px;top:276.40px;color:#1c1c1c;letter-spacing:0.490px;">Read pattern file...</div>
<div class="mi" style="left:65.6px;top:295.20px;color:#1c1c1c;letter-spacing:0.395px;">Save pattern file...</div>
</body></html>
